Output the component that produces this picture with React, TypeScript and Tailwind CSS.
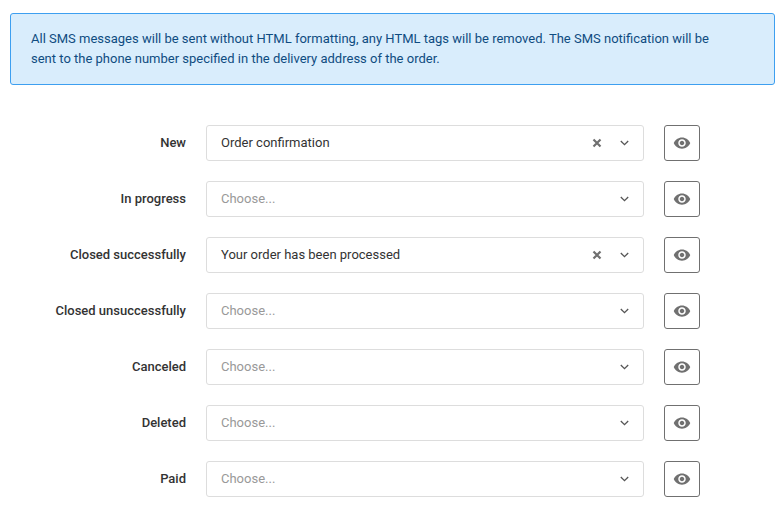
import React from 'react';
import { MdVisibility } from 'react-icons/md';

const rows = [
  { label: 'New', value: 'Order confirmation' },
  { label: 'In progress', value: '' },
  { label: 'Closed successfully', value: 'Your order has been processed' },
  { label: 'Closed unsuccessfully', value: '' },
  { label: 'Canceled', value: '' },
  { label: 'Deleted', value: '' },
  { label: 'Paid', value: '' },
];

const App: React.FC = () => {
  return (
    <div className="w-[783px] h-[518px] overflow-hidden bg-white px-[10px] pt-[13px] font-['Roboto',sans-serif] text-[13px] text-[#333333]">
      <div className="w-[765px] h-[72px] rounded-[3px] border border-[#3d9ff0] bg-[#d9edfc] pl-[20px] pr-[60px] pt-[15px] leading-[20px] text-[#0f4c81]">
        All SMS messages will be sent without HTML formatting, any HTML tags will be removed. The SMS notification will be sent to the phone number specified in the delivery address of the order.
      </div>

      <div className="mt-[40px] flex flex-col gap-5">
        {rows.map((row) => (
          <div key={row.label} className="flex items-center h-9">
            <label className="w-[176px] text-right font-medium">{row.label}</label>
            <div className="ml-5 w-[438px] h-9 flex items-center rounded-[3px] border border-[#dddddd] pl-[14px] pr-[14px]">
              <span className={row.value ? 'flex-1' : 'flex-1 text-[#999999]'}>{row.value || 'Choose...'}</span>
              {row.value && (
                <svg className="mr-[18px]" width="10" height="10" viewBox="0 0 10 10" fill="none" stroke="#707070" strokeWidth="2.2">
                  <path d="M1.5 1.5l7 7M8.5 1.5l-7 7" />
                </svg>
              )}
              <svg width="9" height="6" viewBox="0 0 9 6" fill="none" stroke="#555555" strokeWidth="1.3">
                <path d="M.8 1l3.7 3.7L8.2 1" />
              </svg>
            </div>
            <button className="ml-5 w-9 h-9 flex items-center justify-center rounded-[3px] border border-[#707070] bg-white text-[#707070]">
              <MdVisibility size={18} />
            </button>
          </div>
        ))}
      </div>
    </div>
  );
};

export default App;
